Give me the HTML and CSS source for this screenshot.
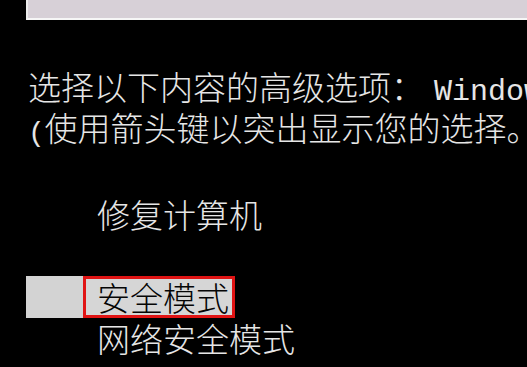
FILE: index.html
```html
<!DOCTYPE html>
<html lang="zh-CN">
<head>
    <meta charset="UTF-8">
    <meta name="viewport" content="width=device-width, initial-scale=1.0">
    <title>高级启动选项</title>
    <link rel="stylesheet" href="styles.css">
</head>
<body>
    <div class="topbar"></div>
    <div class="prompt">
        <div class="line">选择以下内容的高级选项：<span class="latin os">Windows 7</span></div>
        <div class="line"><span class="latin">(</span>使用箭头键以突出显示您的选择。</div>
    </div>
    <ul class="menu">
        <li class="item">修复计算机</li>
        <li class="item blank"></li>
        <li class="item selected"><span class="pick">安全模式</span></li>
        <li class="item">网络安全模式</li>
    </ul>
</body>
</html>
```

FILE: styles.css
```css
body {
    margin: 0;
    padding: 0;
    background-color: #000;
    color: #e6e6e6;
    font-family: "Noto Sans CJK SC", "Liberation Sans", sans-serif;
    font-weight: 300;
    font-size: 33px;
    overflow: hidden;
    height: 367px;
}
.topbar {
    margin-left: 26px;
    height: 18px;
    background-color: #d7d0d7;
    border-left: 2px solid #ececec;
    border-bottom: 2px solid #f6f6f6;
}
.prompt {
    margin-top: 46px;
    padding-left: 28px;
}
.line {
    line-height: 41px;
    height: 41px;
    white-space: nowrap;
    overflow: hidden;
}
.latin {
    font-family: "Liberation Mono", monospace;
    font-weight: normal;
    font-size: 28px;
    letter-spacing: -0.3px;
}
.latin.os {
    font-size: 30px;
    letter-spacing: 0;
    margin-left: 10px;
}
.menu {
    list-style: none;
    margin: 46px 0 0 0;
    padding: 0;
}
.item {
    line-height: 41px;
    height: 41px;
    padding-left: 97px;
    white-space: nowrap;
}
.item.selected {
    display: flex;
    width: max-content;
    height: 42px;
    line-height: 36px;
    margin-left: 26px;
    padding-left: 57px;
    background-color: #d3d3d3;
    color: #050505;
}
.pick {
    border: 3px solid #e01414;
    padding: 0 3px 0 11px;
    background-color: #d6d6d6;
}
```
